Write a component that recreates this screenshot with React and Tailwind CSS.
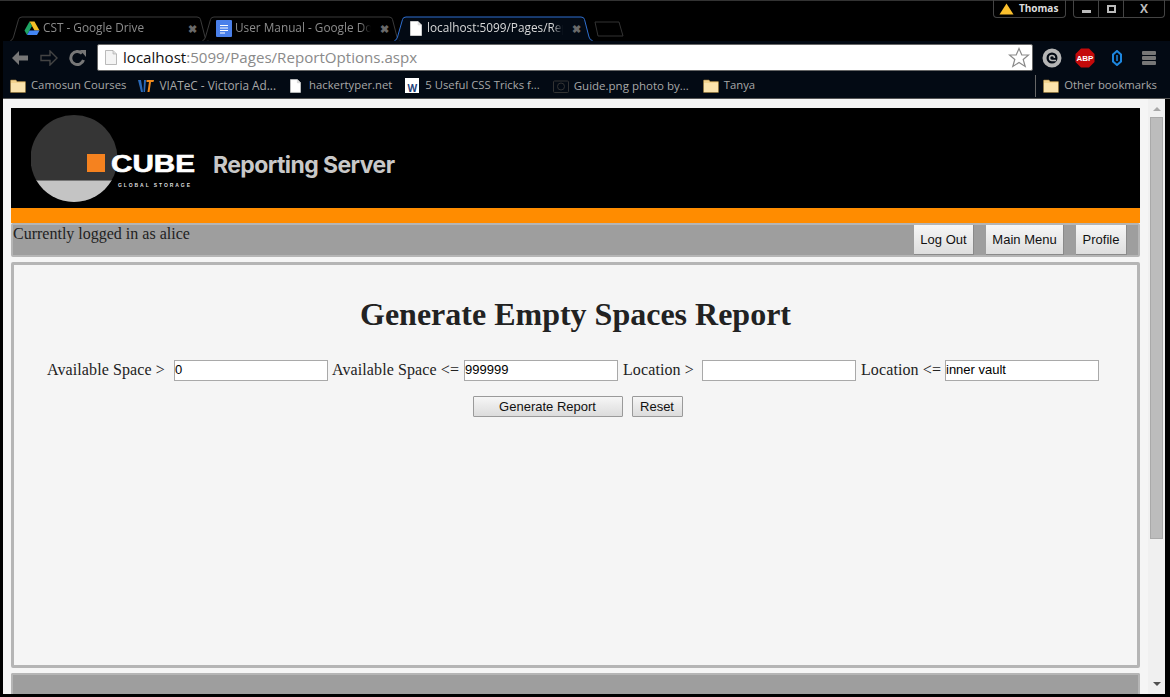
const ui = { fontFamily: '"Open Sans", "Noto Sans", sans-serif' };

function Folder() {
  return (
    <svg width="16" height="14" viewBox="0 0 16 14" className="shrink-0">
      <path d="M0.5 3V1.5Q0.5 1 1 1H6L7 2.5H15Q15.5 2.5 15.5 3V13Q15.5 13.5 15 13.5H1Q0.5 13.5 0.5 13Z" fill="#f4d48f" stroke="#9a7a3c" strokeWidth="0.6" />
      <rect x="1" y="4" width="14" height="9" fill="#fbe3ac" />
    </svg>
  );
}

function FileIcon({ stroke = "#999", fill = "#fff", w = 12, h = 15 }) {
  return (
    <svg width={w} height={h} viewBox="0 0 12 15" className="shrink-0">
      <path d="M0.5 0.5H8L11.5 4V14.5H0.5Z" fill={fill} stroke={stroke} strokeWidth="0.8" />
      <path d="M8 0.5V4H11.5" fill="#ddd" stroke={stroke} strokeWidth="0.6" />
    </svg>
  );
}

function TabShape({ active }) {
  return (
    <svg width="199" height="25" viewBox="0 0 199 25" className="absolute left-0 top-0">
      <path
        d="M0.5 24.5Q2.5 24.5 3.5 21L8.5 3.5Q9 1 12 1H187Q190 1 190.5 3.5L195 21Q196 24.5 198.5 24.5"
        fill={active ? "#030a14" : "#000"}
        stroke={active ? "#2f6fd0" : "#3a3a3a"}
        strokeWidth="1"
      />
    </svg>
  );
}

function Tab({ icon, title, active }) {
  return (
    <div className={`relative w-[192px] h-[24px] shrink-0 ${active ? "z-10" : ""}`}>
      <TabShape active={active} />
      <div className="relative flex items-center h-full pl-[14px] pr-[5px] gap-[3px]">
        <div className="w-[16px] h-[16px] flex items-center justify-center shrink-0">{icon}</div>
        <span className={`flex-1 min-w-0 whitespace-nowrap text-[11.8px] [mask-image:linear-gradient(to_right,black_92%,transparent)] ${active ? "text-[#d8d8d8]" : "text-[#8c8c8c]"}`}>{title}</span>
        <span className="ml-[6px] text-[#6a6a6a] text-[11px] font-bold leading-none shrink-0">✖</span>
      </div>
    </div>
  );
}

function Bookmark({ icon, label, gap = "gap-[5px]", size = "text-[11.3px]", className = "" }) {
  return (
    <div className={`flex items-center ${gap} ${size} text-[#a8a8a8] whitespace-nowrap ${className}`}>
      {icon}
      <span>{label}</span>
    </div>
  );
}

function BarButton({ children, className = "" }) {
  return (
    <div
      className={`h-[30px] flex items-center justify-center text-[13px] text-[#111] bg-gradient-to-b from-[#f6f6f6] to-[#dedede] border-b border-r border-[#8a8a8a] ${className}`}
      style={{ fontFamily: '"Liberation Sans", Arial, sans-serif' }}
    >
      {children}
    </div>
  );
}

function FormField({ label, value, labelW, inputW }) {
  return (
    <>
      <span className="whitespace-nowrap tracking-[0.1px]" style={{ width: labelW }}>{label}</span>
      <div
        className="h-[21px] bg-white border border-[#a9a9a9] flex items-center text-[13px] text-black"
        style={{ width: inputW, fontFamily: '"Liberation Sans", Arial, sans-serif' }}
      >
        {value}
      </div>
    </>
  );
}

function Logo() {
  return (
    <svg width="400" height="100" viewBox="0 0 400 100" className="shrink-0">
      <circle cx="43" cy="50.5" r="43.5" fill="#353535" />
      <path d="M5.5 72.5H80.5A43.5 43.5 0 0 1 5.5 72.5Z" fill="#c4c4c4" />
      <path d="M5.5 72.5H80.5" stroke="#777" strokeWidth="1" />
      <rect x="56" y="46" width="18" height="18" fill="#f5821f" />
      <text x="80" y="64" fontFamily="Liberation Sans" fontWeight="700" fontSize="23" fill="#fff" textLength="84" lengthAdjust="spacingAndGlyphs" stroke="#fff" strokeWidth="0.6">CUBE</text>
      <text x="87" y="79" fontFamily="Liberation Sans" fontWeight="700" fontSize="5" fill="#ddd" textLength="72">GLOBAL STORAGE</text>
      <text x="182" y="64.5" fontFamily="Inter" fontWeight="700" fontSize="23" fill="#c8c8c8" textLength="182" lengthAdjust="spacing">Reporting Server</text>
    </svg>
  );
}

export default function App() {
  return (
    <div className="w-[1170px] h-[697px] overflow-hidden bg-black flex flex-col relative" style={ui}>
      <div className="absolute right-[5px] top-0 flex items-start gap-[7px] text-white z-20">
        <div className="w-[73px] h-[18px] border border-t-0 border-[#444] rounded-b-[4px] flex items-center pl-[5px] gap-[5px] text-[10px] font-bold text-[#ddd]">
          <svg width="15" height="12" viewBox="0 0 15 12"><path d="M7.5 0.5L14.5 11.5H0.5Z" fill="#fbc02d" /></svg>
          Thomas
        </div>
        <div className="w-[92px] h-[18px] border border-t-0 border-[#444] rounded-b-[4px] flex">
          <div className="w-[25px] flex items-end justify-center pb-[4px] border-r border-[#444]"><div className="w-[9px] h-[3px] bg-[#bbb]" /></div>
          <div className="w-[25px] flex items-center justify-center border-r border-[#444]"><div className="w-[9px] h-[8px] border-2 border-[#bbb]" /></div>
          <div className="flex-1 flex items-center justify-center text-[12px] font-bold text-[#bbb] leading-none">X</div>
        </div>
      </div>

      <div className="h-[41px] pt-[15px] pl-[10px] flex shrink-0 border-t border-[#333] relative z-10">
        <Tab
          title="CST - Google Drive"
          icon={
            <svg width="16" height="15" viewBox="0 0 16 15">
              <path d="M5.5 0.5H10.5L15.5 9.5H10.5Z" fill="#f6c026" />
              <path d="M5.5 0.5L0.5 9.5L3 14L8 5Z" fill="#1fa463" />
              <path d="M3 14H13L15.5 9.5H5.5Z" fill="#4285f4" />
            </svg>
          }
        />
        <Tab
          title="User Manual - Google Do"
          icon={
            <svg width="16" height="17" viewBox="0 0 16 17">
              <rect width="16" height="17" rx="1" fill="#4a80ea" />
              <path d="M4 5.5H12M4 8H12M4 10.5H12M4 13H9" stroke="#fff" strokeWidth="1" />
            </svg>
          }
        />
        <Tab title="localhost:5099/Pages/Rep" active icon={<FileIcon stroke="#ddd" />} />
        <svg width="30" height="16" viewBox="0 0 30 16" className="mt-[5px] ml-[8px]">
          <path d="M1 1H25L29 15H4Z" fill="#000" stroke="#333" />
        </svg>
      </div>

      <div className="h-[31px] ml-[3px] pt-[2px] shrink-0 flex items-center bg-[#030a14] pl-[8px]">
        <svg width="18" height="16" viewBox="0 0 18 16" className="shrink-0">
          <path d="M8 1L1 8L8 15V10.5H17V5.5H8Z" fill="#777" />
        </svg>
        <svg width="18" height="16" viewBox="0 0 18 16" className="shrink-0 ml-[11px]">
          <path d="M10 1L17 8L10 15V10.5H1V5.5H10Z" fill="none" stroke="#444" strokeWidth="1.4" />
        </svg>
        <svg width="18" height="18" viewBox="0 0 18 18" className="shrink-0 ml-[11px]">
          <path d="M14.5 11A6.5 6.5 0 1 1 13 4.5" fill="none" stroke="#777" strokeWidth="3" />
          <path d="M11 1H17V8Z" fill="#777" />
        </svg>
        <div className="w-[936px] h-[27px] ml-[10px] bg-white border border-[#666] rounded-[2px] flex items-center pl-[7px] pr-[2px] shrink-0">
          <FileIcon stroke="#aaa" fill="#f4f4f4" />
          <span className="ml-[6px] text-[15.1px] text-[#111] whitespace-nowrap">
            localhost<span className="text-[#8a8a8a]">:5099/Pages/ReportOptions.aspx</span>
          </span>
          <svg width="22" height="21" viewBox="0 0 22 21" className="ml-auto">
            <path d="M11 1.5L13.8 8H20.5L15.2 12.5L17.2 19.5L11 15.5L4.8 19.5L6.8 12.5L1.5 8H8.2Z" fill="#fff" stroke="#8a8a8a" strokeWidth="1.2" />
          </svg>
        </div>
        <div className="flex items-center ml-[9px]">
          <svg width="20" height="20" viewBox="0 0 20 20" className="shrink-0">
            <circle cx="10" cy="10" r="7.5" fill="none" stroke="#b5b5b5" strokeWidth="4" />
            <path d="M12.5 10A2.5 2.5 0 1 0 10 12.5H14" fill="none" stroke="#b5b5b5" strokeWidth="1.5" />
          </svg>
          <svg width="20" height="20" viewBox="0 0 20 20" className="shrink-0 ml-[13px]">
            <path d="M6 0.5H14L19.5 6V14L14 19.5H6L0.5 14V6Z" fill="#c40a0a" />
            <text x="10" y="13" textAnchor="middle" fontSize="8" fontWeight="700" fontFamily="Liberation Sans" fill="#fff">ABP</text>
          </svg>
          <svg width="12" height="16" viewBox="0 0 12 16" className="shrink-0 ml-[16px]">
            <path d="M6 1L10 4.5V11.5L6 15L2 11.5V4.5Z" fill="none" stroke="#1d87e0" strokeWidth="2" />
            <path d="M6 5V11" stroke="#1d87e0" strokeWidth="1.5" />
          </svg>
          <div className="w-[14px] ml-[19px] flex flex-col gap-[1px] shrink-0">
            <div className="h-[4px] bg-[#777] rounded-[1px]" />
            <div className="h-[4px] bg-[#777] rounded-[1px]" />
            <div className="h-[4px] bg-[#777] rounded-[1px]" />
          </div>
        </div>
      </div>

      <div className="h-[27px] ml-[3px] shrink-0 flex items-center bg-[#030a14] pl-[7px] pr-[13px] pt-[1px] border-b border-[#555]">
        <Bookmark icon={<Folder />} label="Camosun Courses" />
        <Bookmark
          className="ml-[12px]"
          size="text-[11.8px]"
          label="VIATeC - Victoria Ad..."
          icon={
            <svg width="16" height="14" viewBox="0 0 16 14" className="shrink-0">
              <path d="M0 1H3L5 13H3ZM6 1H8L7 13H5.5Z" fill="#2a69b8" />
              <path d="M8.5 1H16L15.5 3H13L11.5 13H9.5L11 3H8.5Z" fill="#f08a1d" />
            </svg>
          }
        />
        <Bookmark className="ml-[14px]" gap="gap-[8px]" icon={<FileIcon stroke="#ccc" w={11} h={14} />} label="hackertyper.net" />
        <Bookmark
          className="ml-[13px]"
          gap="gap-[6px]"
          label="5 Useful CSS Tricks f..."
          icon={
            <div className="w-[14px] h-[15px] bg-white flex items-end justify-center text-[10px] font-bold leading-none text-[#1f3f7a] shrink-0">W</div>
          }
        />
        <Bookmark
          className="ml-[13px]"
          size="text-[11.5px]"
          label="Guide.png photo by..."
          icon={
            <svg width="16" height="14" viewBox="0 0 16 14" className="shrink-0">
              <rect x="0.5" y="2" width="15" height="11.5" rx="1" fill="none" stroke="#333" />
              <circle cx="8" cy="7.5" r="3.5" fill="none" stroke="#333" />
            </svg>
          }
        />
        <Bookmark className="ml-[14px]" icon={<Folder />} label="Tanya" />
        <div className="ml-auto w-px h-[22px] bg-[#666]" />
        <Bookmark className="ml-[7px]" icon={<Folder />} label="Other bookmarks" />
      </div>

      <div className="ml-[3px] w-[1162px] flex h-[595px] shrink-0 bg-[#f5f5f5]">
        <div className="w-[1145px] shrink-0 pl-[8px] pr-[8px] pt-[9px] flex flex-col" style={{ fontFamily: '"Liberation Serif", "Times New Roman", serif' }}>
          <div className="h-[100px] bg-black shrink-0 pl-[20px] flex items-center"><Logo /></div>
          <div className="h-[15px] bg-[#ff8c00] shrink-0" />
          <div className="h-[34px] shrink-0 bg-[#9e9e9e] border-2 border-[#b5b5b5] rounded-[2px] flex justify-between">
            <span className="text-[16px] leading-[18px] text-[#222]">Currently logged in as alice</span>
            <div className="flex items-start">
              <BarButton className="w-[60px]">Log Out</BarButton>
              <BarButton className="w-[78px] ml-[12px]">Main Menu</BarButton>
              <BarButton className="w-[51px] ml-[12px] mr-[11px]">Profile</BarButton>
            </div>
          </div>
          <div className="h-[406px] mt-[5px] shrink-0 bg-[#f5f5f5] border-[3px] border-[#b5b5b5] rounded-[2px] flex flex-col items-center">
            <h1 className="mt-[31px] text-[32px] leading-[36px] font-bold text-[#222]">Generate Empty Spaces Report</h1>
            <div className="mt-[26px] self-start ml-[33px] flex items-center text-[16px] text-[#222]">
              <FormField label="Available Space >" value="0" labelW={127} inputW={154} />
              <span className="w-[4px]" />
              <FormField label="Available Space <=" value="999999" labelW={132} inputW={154} />
              <span className="w-[5px]" />
              <FormField label="Location >" value="" labelW={79} inputW={154} />
              <span className="w-[5px]" />
              <FormField label="Location <=" value="inner vault" labelW={84} inputW={154} />
            </div>
            <div className="mt-[14px] ml-[4px] flex gap-[9px] text-[13px] text-[#111]" style={{ fontFamily: '"Liberation Sans", Arial, sans-serif' }}>
              <div className="w-[150px] h-[21px] border border-[#9a9a9a] rounded-[1px] bg-gradient-to-b from-[#f6f6f6] to-[#dcdcdc] flex items-center justify-center">Generate Report</div>
              <div className="w-[51px] h-[21px] border border-[#9a9a9a] rounded-[1px] bg-gradient-to-b from-[#f6f6f6] to-[#dcdcdc] flex items-center justify-center">Reset</div>
            </div>
          </div>
          <div className="h-[21px] mt-[5px] shrink-0 bg-[#9e9e9e] border-2 border-b-0 border-[#b5b5b5] rounded-t-[2px]" />
        </div>
        <div className="w-[17px] shrink-0 bg-[#f0f0f0] flex flex-col items-center">
          <div className="mt-[8px] w-0 h-0 border-x-[4px] border-x-transparent border-b-[4px] border-b-[#a8a8a8]" />
          <div className="mt-[6px] w-[13px] h-[422px] bg-[#bcbcbc] border border-[#a9a9a9]" />
          <div className="mt-auto mb-[8px] w-0 h-0 border-x-[4px] border-x-transparent border-t-[4px] border-t-[#505050]" />
        </div>
      </div>
    </div>
  );
}
